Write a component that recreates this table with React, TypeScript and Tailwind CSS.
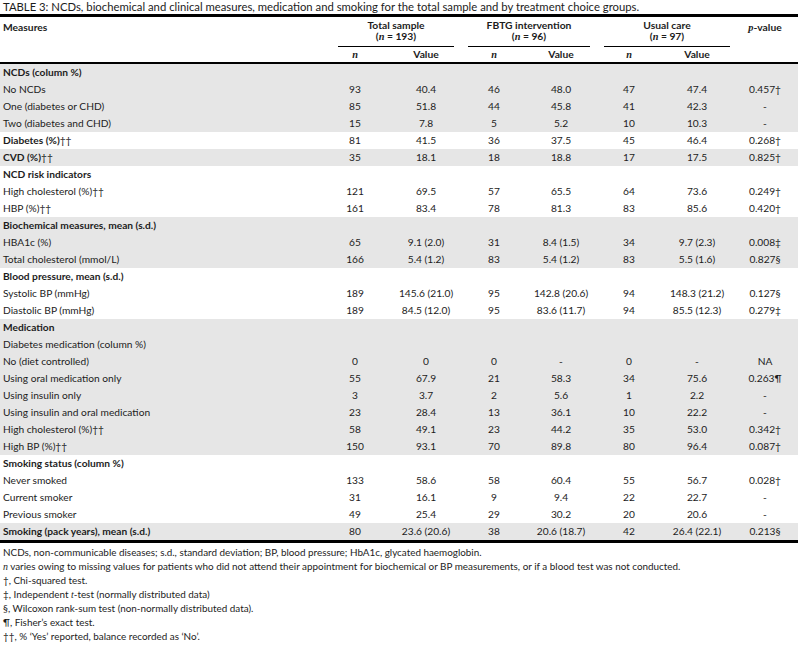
import React from "react";

const GRID = "grid grid-cols-[320px_70px_72px_64px_70px_66px_70px_66px]";

type Row = { label: React.ReactNode; bold?: boolean; grey?: boolean; v?: string[] };

const dd = "††";
const rows: Row[] = [
  { label: "NCDs (column %)", bold: true, grey: true },
  { label: "No NCDs", grey: true, v: ["93", "40.4", "46", "48.0", "47", "47.4", "0.457†"] },
  { label: "One (diabetes or CHD)", grey: true, v: ["85", "51.8", "44", "45.8", "41", "42.3", "-"] },
  { label: "Two (diabetes and CHD)", grey: true, v: ["15", "7.8", "5", "5.2", "10", "10.3", "-"] },
  { label: <>Diabetes (%)<span className="font-normal">{dd}</span></>, bold: true, v: ["81", "41.5", "36", "37.5", "45", "46.4", "0.268†"] },
  { label: <>CVD (%)<span className="font-normal">{dd}</span></>, bold: true, grey: true, v: ["35", "18.1", "18", "18.8", "17", "17.5", "0.825†"] },
  { label: "NCD risk indicators", bold: true },
  { label: "High cholesterol (%)††", v: ["121", "69.5", "57", "65.5", "64", "73.6", "0.249†"] },
  { label: "HBP (%)††", v: ["161", "83.4", "78", "81.3", "83", "85.6", "0.420†"] },
  { label: "Biochemical measures, mean (s.d.)", bold: true, grey: true },
  { label: "HBA1c (%)", grey: true, v: ["65", "9.1 (2.0)", "31", "8.4 (1.5)", "34", "9.7 (2.3)", "0.008‡"] },
  { label: "Total cholesterol (mmol/L)", grey: true, v: ["166", "5.4 (1.2)", "83", "5.4 (1.2)", "83", "5.5 (1.6)", "0.827§"] },
  { label: "Blood pressure, mean (s.d.)", bold: true },
  { label: "Systolic BP (mmHg)", v: ["189", "145.6 (21.0)", "95", "142.8 (20.6)", "94", "148.3 (21.2)", "0.127§"] },
  { label: "Diastolic BP (mmHg)", v: ["189", "84.5 (12.0)", "95", "83.6 (11.7)", "94", "85.5 (12.3)", "0.279‡"] },
  { label: "Medication", bold: true, grey: true },
  { label: "Diabetes medication (column %)", grey: true },
  { label: "No (diet controlled)", grey: true, v: ["0", "0", "0", "-", "0", "-", "NA"] },
  { label: "Using oral medication only", grey: true, v: ["55", "67.9", "21", "58.3", "34", "75.6", "0.263¶"] },
  { label: "Using insulin only", grey: true, v: ["3", "3.7", "2", "5.6", "1", "2.2", "-"] },
  { label: "Using insulin and oral medication", grey: true, v: ["23", "28.4", "13", "36.1", "10", "22.2", "-"] },
  { label: "High cholesterol (%)††", grey: true, v: ["58", "49.1", "23", "44.2", "35", "53.0", "0.342†"] },
  { label: "High BP (%)††", grey: true, v: ["150", "93.1", "70", "89.8", "80", "96.4", "0.087†"] },
  { label: "Smoking status (column %)", bold: true },
  { label: "Never smoked", v: ["133", "58.6", "58", "60.4", "55", "56.7", "0.028†"] },
  { label: "Current smoker", v: ["31", "16.1", "9", "9.4", "22", "22.7", "-"] },
  { label: "Previous smoker", v: ["49", "25.4", "29", "30.2", "20", "20.6", "-"] },
  { label: "Smoking (pack years), mean (s.d.)", bold: true, grey: true, v: ["80", "23.6 (20.6)", "38", "20.6 (18.7)", "42", "26.4 (22.1)", "0.213§"] },
];

const It = ({ c }: { c: string }) => (
  <span className="italic leading-none" style={{ fontFamily: '"Liberation Serif", serif' }}>{c}</span>
);

export default function App() {
  return (
    <div
      className="w-[802px] h-[645px] bg-white text-[#1c1c1c] overflow-hidden"
      style={{ fontFamily: "Lato, 'Open Sans', sans-serif" }}
    >
      <div className="w-[798px]">
        <div className="text-[11.3px] leading-[14px] h-[14px] pl-[3px] whitespace-nowrap">
          TABLE 3: NCDs, biochemical and clinical measures, medication and smoking for the total sample and by treatment choice groups.
        </div>
        <div className="border-t-[3px] border-black" />
        {/* header */}
        <div className={`${GRID} text-[10.3px] font-bold border-b-2 border-black`}>
          <div className="row-span-2 pl-[3px] pt-[3px] leading-[14px]">Measures</div>
          <div className="col-span-2 flex flex-col items-center pt-[3px] leading-[11px] h-[30px] border-b border-black ml-[18px] mr-[8px]">
            <span>Total sample</span>
            <span>(<It c="n" /> = 193)</span>
          </div>
          <div className="col-span-2 flex flex-col items-center pt-[3px] leading-[11px] h-[30px] border-b border-black ml-[6px] mr-[6px]">
            <span>FBTG intervention</span>
            <span>(<It c="n" /> = 96)</span>
          </div>
          <div className="col-span-2 flex flex-col items-center pt-[3px] leading-[11px] h-[30px] border-b border-black ml-[8px] mr-[2px]">
            <span>Usual care</span>
            <span>(<It c="n" /> = 97)</span>
          </div>
          <div className="row-span-2 text-center pt-[3px] leading-[14px]"><It c="p" />-value</div>
          <div className="text-center leading-[15px] h-[15px]"><It c="n" /></div>
          <div className="text-center leading-[15px] h-[15px]">Value</div>
          <div className="text-center leading-[15px] h-[15px]"><It c="n" /></div>
          <div className="text-center leading-[15px] h-[15px]">Value</div>
          <div className="text-center leading-[15px] h-[15px]"><It c="n" /></div>
          <div className="text-center leading-[15px] h-[15px]">Value</div>
        </div>
        {/* body */}
        <div className="text-[10.2px]">
          {rows.map((r, i) => (
            <div
              key={i}
              className={`${GRID} h-[17px] leading-[17px] ${r.grey ? "bg-[#e6e6e6]" : "bg-white"}`}
            >
              <div className={`pl-[3px] whitespace-nowrap ${r.bold ? "font-bold" : ""}`}>{r.label}</div>
              {(r.v ?? ["", "", "", "", "", "", ""]).map((x, j) => (
                <div key={j} className="text-center whitespace-nowrap">{x}</div>
              ))}
            </div>
          ))}
        </div>
        <div className="border-t-[3px] border-black" />
        <div className="text-[9.9px] pl-[3px] pt-[2px] [&>div]:h-[14px] [&>div]:leading-[14px] [&>div]:whitespace-nowrap">
          <div>NCDs, non-communicable diseases; s.d., standard deviation; BP, blood pressure; HbA1c, glycated haemoglobin.</div>
          <div><It c="n" /> varies owing to missing values for patients who did not attend their appointment for biochemical or BP measurements, or if a blood test was not conducted.</div>
          <div>†, Chi-squared test.</div>
          <div>‡, Independent <It c="t" />-test (normally distributed data)</div>
          <div>§, Wilcoxon rank-sum test (non-normally distributed data).</div>
          <div>¶, Fisher’s exact test.</div>
          <div>††, % ‘Yes’ reported, balance recorded as ‘No’.</div>
        </div>
      </div>
    </div>
  );
}
